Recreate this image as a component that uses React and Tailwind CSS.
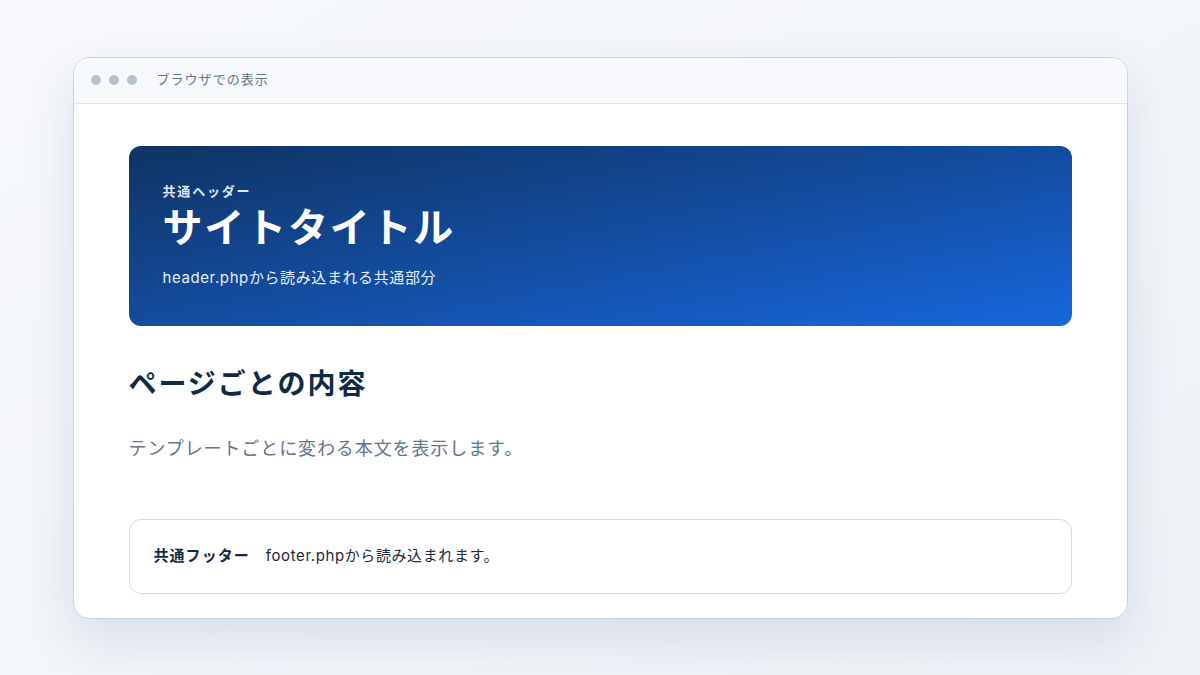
import React from 'react';

const font = { fontFamily: 'Inter, "Noto Sans CJK JP", sans-serif' };

const BrowserFrame = ({ title, children }) => (
    <div className="w-[1055px] h-[562px] bg-white rounded-2xl border border-[#c9d3e0] shadow-[0_20px_50px_rgba(30,60,110,0.12)] overflow-hidden flex flex-col">
        <div className="h-[46px] shrink-0 bg-[#f7f9fc] border-b border-[#dfe5ee] flex items-center px-[17px]">
            <div className="flex items-center gap-2">
                <span className="w-[10px] h-[10px] rounded-full bg-[#b4c2d4]"></span>
                <span className="w-[10px] h-[10px] rounded-full bg-[#b4c2d4]"></span>
                <span className="w-[10px] h-[10px] rounded-full bg-[#b4c2d4]"></span>
            </div>
            <span className="ml-[20px] text-[13px] tracking-[0.08em] text-[#64748b]">{title}</span>
        </div>
        {children}
    </div>
);

const App = () => {
    return (
        <div style={font} className="w-full h-[675px] bg-gradient-to-br from-[#f7f9fc] to-[#eef2f7] flex items-center justify-center">
            <BrowserFrame title="ブラウザでの表示">
                <div className="flex-1 px-[55px] pt-[42px]">
                    {/* 共通ヘッダー */}
                    <div className="h-[180px] rounded-xl bg-gradient-to-br from-[#0f3364] to-[#1667de] px-[34px] pt-[36px] text-white">
                        <div className="text-[13px] font-bold leading-[18px] tracking-[0.14em] text-[#dbe6f7]">共通ヘッダー</div>
                        <h1 className="mt-[4px] text-[40px] font-bold leading-[48px] tracking-[0.045em]">サイトタイトル</h1>
                        <p className="mt-[15px] text-[15px] leading-[22px] tracking-[0.04em] text-[#e6eefb]">header.phpから読み込まれる共通部分</p>
                    </div>

                    {/* 本文 */}
                    <h2 className="mt-[40px] text-[28px] font-bold leading-[36px] tracking-[0.07em] text-[#102a45]">ページごとの内容</h2>
                    <p className="mt-[33px] text-[18px] leading-[28px] tracking-[0.05em] text-[#64748b]">テンプレートごとに変わる本文を表示します。</p>

                    {/* 共通フッター */}
                    <div className="mt-[56px] h-[75px] rounded-xl border border-[#d3dbe6] px-[24px] flex items-center text-[15px]">
                        <span className="font-bold tracking-[0.07em] text-[#102a45]">共通フッター</span>
                        <span className="ml-[16px] tracking-[0.04em] text-[#1e293b]">footer.phpから読み込まれます。</span>
                    </div>
                </div>
            </BrowserFrame>
        </div>
    );
};

export default App;
